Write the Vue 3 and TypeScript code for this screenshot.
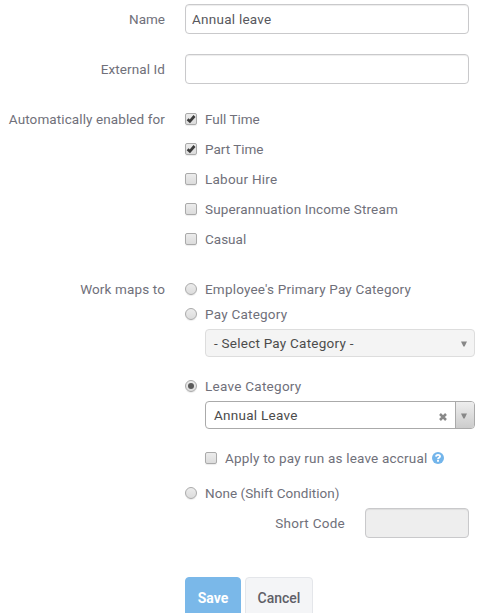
<script setup lang="ts">
import { ref } from 'vue'

interface Option {
  label: string
  checked: boolean
  cls: string
}

const name = ref('Annual leave')
const externalId = ref('')
const shortCode = ref('')
const applyAccrual = ref(false)
const mapping = ref('leave')
const employment = ref<Option[]>([
  { label: 'Full Time', checked: true, cls: 't-full' },
  { label: 'Part Time', checked: true, cls: 't-part' },
  { label: 'Labour Hire', checked: false, cls: 't-labour' },
  { label: 'Superannuation Income Stream', checked: false, cls: 't-super' },
  { label: 'Casual', checked: false, cls: 't-casual' },
])
</script>

<template>
  <form class="form" @submit.prevent>
    <div class="row field">
      <label class="label"><span class="t-name">Name</span></label>
      <input v-model="name" class="input" type="text" />
    </div>
    <div class="row field">
      <label class="label"><span class="t-ext">External Id</span></label>
      <input v-model="externalId" class="input" type="text" />
    </div>
    <div class="row enabled">
      <div class="label"><span class="t-auto">Automatically enabled for</span></div>
      <div class="checks">
        <label v-for="o in employment" :key="o.label" class="option">
          <input v-model="o.checked" class="native" type="checkbox" />
          <span class="box">
            <svg v-if="o.checked" viewBox="0 0 12 12"><path d="M2.6 6.2 4.9 8.4 9.5 3" /></svg>
          </span>
          <span :class="o.cls">{{ o.label }}</span>
        </label>
      </div>
    </div>
    <div class="row maps">
      <div class="label"><span class="t-work">Work maps to</span></div>
      <div class="choices">
        <label class="option">
          <input v-model="mapping" class="native" type="radio" value="primary" />
          <span class="box round"><i v-if="mapping === 'primary'" /></span>
          <span class="t-primary">Employee's Primary Pay Category</span>
        </label>
        <label class="option">
          <input v-model="mapping" class="native" type="radio" value="pay" />
          <span class="box round"><i v-if="mapping === 'pay'" /></span>
          <span class="t-pay">Pay Category</span>
        </label>
        <div class="select disabled">
          <span class="value t-select">- Select Pay Category -</span>
          <span class="arrow"><svg viewBox="0 0 6 6"><path d="M0 0.5H6L3.6 5.5H2.4Z" /></svg></span>
        </div>
        <label class="option leave">
          <input v-model="mapping" class="native" type="radio" value="leave" />
          <span class="box round"><i v-if="mapping === 'leave'" /></span>
          <span class="t-leave">Leave Category</span>
        </label>
        <div class="select">
          <span class="value t-annual">Annual Leave</span>
          <svg class="clear" viewBox="0 0 8 8"><path d="M1 1 7 7M7 1 1 7" /></svg>
          <span class="arrow"><svg viewBox="0 0 6 6"><path d="M0 0.5H6L3.6 5.5H2.4Z" /></svg></span>
        </div>
        <label class="option accrual">
          <input v-model="applyAccrual" class="native" type="checkbox" />
          <span class="box" />
          <span class="t-apply">Apply to pay run as leave accrual</span>
          <svg class="help" viewBox="0 0 12 12">
            <circle cx="6" cy="6" r="6" />
            <path d="M4 4.6C4.1 2.3 8 2.3 8 4.5 8 5.8 6 5.6 6 7.2M6 8V9.8" />
          </svg>
        </label>
        <label class="option none">
          <input v-model="mapping" class="native" type="radio" value="none" />
          <span class="box round"><i v-if="mapping === 'none'" /></span>
          <span class="t-none">None (Shift Condition)</span>
        </label>
        <div class="short">
          <span class="t-short">Short Code</span>
          <input v-model="shortCode" class="input" type="text" disabled />
        </div>
      </div>
    </div>
    <div class="actions">
      <button class="btn save" type="submit"><span class="t-save">Save</span></button>
      <button class="btn cancel" type="button"><span class="t-cancel">Cancel</span></button>
    </div>
  </form>
</template>

<style>
body {
  background: #fff;
}
</style>

<style scoped>
.form {
  box-sizing: border-box;
  width: 478px;
  height: 613px;
  padding-top: 4px;
  overflow: hidden;
  color: #70707a;
  font: 13.5px/20px Roboto, "Liberation Sans", sans-serif;
  white-space: nowrap;
}
.row {
  display: grid;
  grid-template-columns: 165px 284px;
  column-gap: 20px;
}
.field {
  height: 30px;
  margin-bottom: 20px;
}
.label {
  padding-top: 5px;
  text-align: right;
}
.input {
  box-sizing: border-box;
  width: 100%;
  height: 30px;
  margin: 0;
  padding: 0 6px;
  border: 1px solid #c9c9cb;
  border-radius: 4px;
  outline: none;
  background: #fff;
  box-shadow: inset 0 1px 1px rgba(0, 0, 0, 0.075);
  color: #58585d;
  font: inherit;
  letter-spacing: 0.25px;
}
.input:disabled {
  background: #eee;
}
.checks {
  display: flex;
  flex-direction: column;
  gap: 10px;
  padding-top: 5px;
}
.option {
  display: flex;
  align-items: center;
  height: 20px;
}
.native {
  display: none;
}
.box {
  box-sizing: border-box;
  flex: none;
  display: flex;
  align-items: center;
  justify-content: center;
  width: 12px;
  height: 12px;
  margin-right: 8px;
  border: 1px solid #aaa;
  border-radius: 2px;
  background: linear-gradient(#ececec, #dcdcdc);
  box-shadow: 0 1px 1px rgba(0, 0, 0, 0.08);
}
.box svg {
  flex: none;
  width: 12px;
  height: 12px;
  fill: none;
  stroke: #3c3c3c;
  stroke-width: 2.7;
}
.round {
  border-radius: 50%;
}
.round i {
  width: 6px;
  height: 6px;
  border-radius: 50%;
  background: #5a5a5a;
}
.maps {
  margin-top: 25px;
}
.choices {
  display: flex;
  flex-direction: column;
  padding-top: 5px;
}
.choices > .option + .option {
  margin-top: 5px;
}
.select {
  box-sizing: border-box;
  display: flex;
  align-items: center;
  width: 270px;
  height: 28px;
  margin: 5px 0 0 20px;
  border: 1px solid #aaa;
  border-radius: 4px;
  color: #4c4c4c;
}
.select.disabled {
  border-color: #ddd;
  background: #f4f4f4;
}
.value {
  flex: 1;
  padding-left: 8px;
}
.arrow {
  box-sizing: border-box;
  display: flex;
  align-items: center;
  justify-content: center;
  width: 19px;
  height: 26px;
  padding-top: 2px;
  border-left: 1px solid #aaa;
  border-radius: 0 3px 3px 0;
  background: linear-gradient(#eee, #ccc);
}
.disabled .arrow {
  border-color: transparent;
  background: none;
}
.arrow svg {
  width: 6px;
  height: 6px;
  margin-right: 2px;
  fill: #888;
}
.clear {
  width: 8px;
  height: 8px;
  margin: 3px 8px 0 0;
  fill: none;
  stroke: #888;
  stroke-width: 2.5;
}
.leave {
  margin-top: 19px;
}
.accrual {
  margin: 19px 0 0 20px;
}
.help {
  width: 12px;
  height: 12px;
  margin-left: 4.5px;
  fill: #73b5eb;
}
.help path {
  fill: none;
  stroke: #fff;
  stroke-width: 1.9;
}
.choices > .none.option {
  margin-top: 15px;
}
.short {
  display: flex;
  align-items: center;
  justify-content: flex-end;
  gap: 20px;
  margin-top: 5px;
}
.short .input {
  width: 104px;
}
.actions {
  display: flex;
  gap: 4px;
  margin: 39px 0 0 185px;
}
.btn {
  box-sizing: border-box;
  height: 41px;
  padding: 0;
  border: 1px solid #7ab8e9;
  border-radius: 4px;
  font: 500 14px/20px Roboto, "Liberation Sans", sans-serif;
}
.save {
  width: 56px;
  background: #7ab8e9;
  color: #fff;
}
.cancel {
  width: 68px;
  border-color: #e4e6ea;
  background: #f4f5f7;
  color: #5f5f68;
}
.t-ext,
.t-auto,
.t-super,
.t-work {
  letter-spacing: 0.13px;
}
.t-auto,
.t-ext {
  letter-spacing: 0.1px;
}
.t-primary,
.t-apply {
  letter-spacing: 0.19px;
}
.t-labour,
.t-pay,
.t-select {
  letter-spacing: 0.24px;
}
.t-leave,
.t-annual,
.t-short {
  letter-spacing: 0.27px;
}
.t-none {
  letter-spacing: 0.05px;
}
.t-save {
  font-weight: 700;
}
</style>
